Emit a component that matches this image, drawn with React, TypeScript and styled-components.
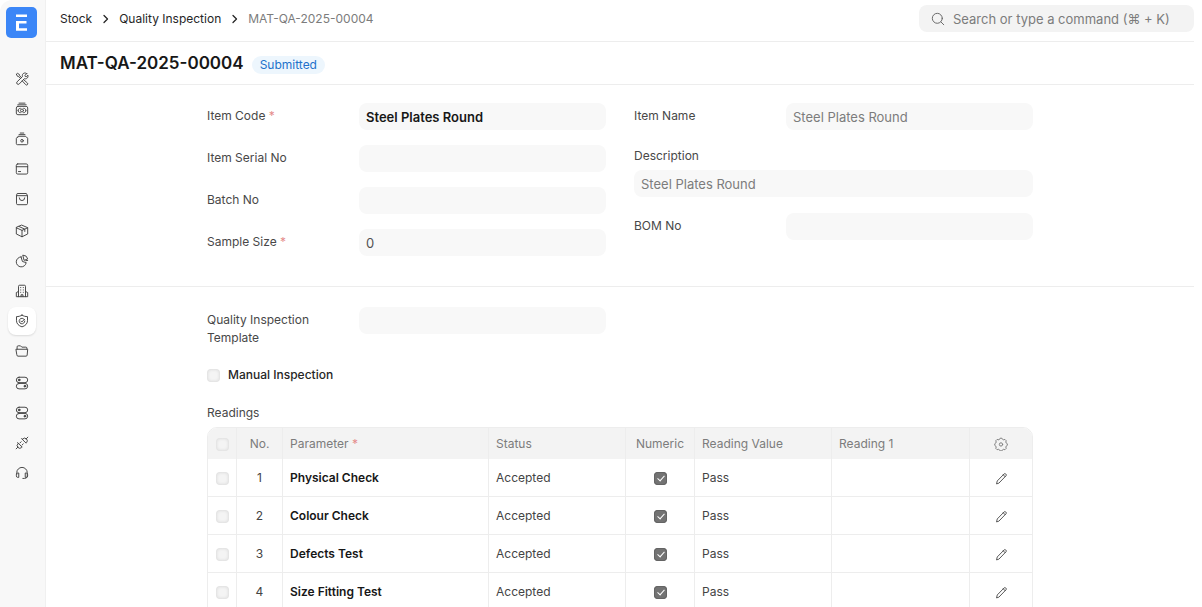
import React from 'react';
import styled, { createGlobalStyle, css } from 'styled-components';

const GlobalStyle = createGlobalStyle`
  *, *::before, *::after { box-sizing: border-box; }
  body {
    margin: 0;
    background: #fff;
    color: #383838;
    font-family: Inter, "Liberation Sans", sans-serif;
    font-size: 12px;
    line-height: 18px;
  }
  button, input { font: inherit; color: inherit; margin: 0; }
`;

const Shell = styled.div`
  display: flex;
  height: 100vh;
  padding-right: 8px;
  overflow: hidden;
`;

const Sidebar = styled.aside`
  flex: none;
  display: flex;
  flex-direction: column;
  align-items: center;
  width: 46px;
  padding: 7px 2px 0 0;
  background: #f8f8f8;
  border-right: 1px solid #f0f0f0;
  border-top-left-radius: 12px;
`;

const LogoLink = styled.a`
  display: block;
  width: 31px;
  height: 31px;
  margin-bottom: 27px;
  svg { display: block; }
`;

const Nav = styled.nav`
  display: flex;
  flex-direction: column;
  gap: 4px;
`;

const NavGroup = styled.div`
  display: flex;
  flex-direction: column;
  gap: 2px;
`;

const NavLink = styled.a<{ $active?: boolean }>`
  display: flex;
  align-items: center;
  justify-content: center;
  width: 28px;
  height: 28px;
  border-radius: 8px;
  color: #444;
  ${(p) => p.$active && css`
    background: #fff;
    box-shadow: 0 1px 2px rgba(0, 0, 0, 0.12);
  `}
`;

const Main = styled.main`
  flex: 1;
  min-width: 0;
`;

const TopBar = styled.header`
  display: flex;
  align-items: center;
  justify-content: space-between;
  height: 42px;
  padding: 0 0 4px 14px;
  border-bottom: 1px solid #ededed;
`;

const Crumbs = styled.nav`
  display: flex;
  align-items: center;
  gap: 9px;
`;

const Crumb = styled.a<{ $current?: boolean }>`
  color: ${(p) => (p.$current ? '#7c7c7c' : '#262626')};
  text-decoration: none;
`;

const SearchBox = styled.label`
  display: flex;
  align-items: center;
  gap: 8px;
  width: 275px;
  height: 27px;
  padding: 0 12px;
  border-radius: 8px;
  background: #f3f3f3;
  color: #666;
  font-size: 13px;
  svg { flex: none; }
`;

const SearchInput = styled.input`
  flex: 1;
  min-width: 0;
  padding: 0;
  border: 0;
  outline: 0;
  background: transparent;
  &::placeholder { color: #7c7c7c; opacity: 1; }
`;

const TitleBar = styled.div`
  display: flex;
  align-items: center;
  gap: 8px;
  height: 43px;
  padding-left: 14px;
  border-bottom: 1px solid #ededed;
`;

const Title = styled.h1`
  margin: 0;
  color: #171717;
  font-size: 17px;
  line-height: 24px;
  font-weight: 600;
`;

const Badge = styled.span`
  margin-top: 3px;
  padding: 0 8px;
  border-radius: 9px;
  background: #edf6fd;
  color: #2271cb;
`;

const Section = styled.section<{ $divided?: boolean }>`
  padding: ${(p) => (p.$divided ? '18px 0 30px' : '20px 0 0')};
  border-bottom: ${(p) => (p.$divided ? '1px solid #ededed' : '0')};
`;

const Content = styled.div`
  max-width: 826px;
  margin: 0 auto;
`;

const Columns = styled.div`
  display: grid;
  grid-template-columns: 1fr 1fr;
  column-gap: 28px;
`;

const Column = styled.div<{ $gap: number }>`
  display: flex;
  flex-direction: column;
  gap: ${(p) => p.$gap}px;
`;

const FieldRow = styled.div<{ $stacked?: boolean }>`
  display: grid;
  grid-template-columns: ${(p) => (p.$stacked ? '1fr' : '152px 1fr')};
  row-gap: 5px;
  align-items: start;
`;

const FieldLabel = styled.label<{ $stacked?: boolean }>`
  max-width: 120px;
  padding-top: ${(p) => (p.$stacked ? '1px' : '4px')};
  color: #484848;
`;

const Required = styled.span`
  color: #e58b8b;
`;

const FieldInput = styled.input<{ $strong?: boolean; $dark?: boolean }>`
  width: 100%;
  height: 27px;
  padding: 0 7px;
  border: 0;
  border-radius: 8px;
  outline: 0;
  background: #f8f8f8;
  color: ${(p) => (p.$strong ? '#171717' : p.$dark ? '#525252' : '#7c7c7c')};
  font-size: 13px;
  font-weight: ${(p) => (p.$strong ? 600 : 400)};
`;

const Tick = styled.input`
  appearance: none;
  display: inline-block;
  position: relative;
  width: 13px;
  height: 13px;
  border-radius: 4px;
  background: #f4f4f4;
  box-shadow: inset 0 0 3px 1px rgba(0, 0, 0, 0.09);
  vertical-align: middle;
  &:checked {
    background: #737373;
    box-shadow: inset 0 0 0 1px #646464;
  }
  &:checked::after {
    content: '';
    position: absolute;
    left: 5px;
    top: 2px;
    width: 4px;
    height: 7px;
    border: solid #fff;
    border-width: 0 1px 1px 0;
    transform: rotate(42deg);
  }
`;

const TickRow = styled.div`
  display: flex;
  align-items: center;
  gap: 8px;
  margin: 19px 0 20px;
  color: #262626;
  font-weight: 500;
`;

const TableLabel = styled.h2`
  margin: 0 0 5px;
  color: #484848;
  font-size: 12px;
  line-height: 18px;
  font-weight: 400;
`;

const Table = styled.table`
  width: 100%;
  table-layout: fixed;
  border: 1px solid #ededed;
  border-radius: 10px 10px 0 0;
  border-collapse: separate;
  border-spacing: 0;
  overflow: hidden;
`;

const cell = css<{ $center?: boolean }>`
  padding: 0 ${(p) => (p.$center ? '0' : '7px')};
  border-right: 1px solid #ededed;
  text-align: ${(p) => (p.$center ? 'center' : 'left')};
  white-space: nowrap;
  &:last-child { border-right: 0; }
`;

const Th = styled.th<{ $center?: boolean }>`
  ${cell}
  height: 31px;
  background: #f3f3f3;
  color: #7c7c7c;
  font-weight: 400;
`;

const Td = styled.td<{ $center?: boolean; $strong?: boolean }>`
  ${cell}
  height: 38px;
  border-bottom: 1px solid #ededed;
  color: ${(p) => (p.$strong ? '#171717' : '#444')};
  font-weight: ${(p) => (p.$strong ? 600 : 400)};
`;

const IconButton = styled.button`
  display: inline-flex;
  padding: 2px;
  border: 0;
  background: transparent;
  vertical-align: middle;
`;

type IconProps = { children: React.ReactNode; size?: number };

const Icon = ({ children, size = 14 }: IconProps) => (
  <svg width={size} height={size} viewBox="0 0 16 16" fill="none" stroke="currentColor"
    strokeWidth="1.1" strokeLinecap="round" strokeLinejoin="round" aria-hidden="true">
    {children}
  </svg>
);

const toggles = (
  <>
    <rect x="1.5" y="1.4" width="13" height="6.2" rx="3.1" />
    <circle cx="4.7" cy="4.5" r="1" fill="currentColor" />
    <rect x="1.5" y="8.5" width="13" height="6.2" rx="3.1" />
    <circle cx="11.3" cy="11.6" r="1" fill="currentColor" />
  </>
);

type NavEntry = { name: string; art: React.ReactNode; active?: boolean };

const navGroups: NavEntry[][] = [
  [
    {
      name: 'Tools',
      art: (
        <>
          <path d="M1.6 2.6 2.7 1.5 5 2.8 5.3 4.3 7.4 6.4M1.6 2.6 2.9 5 4.3 5.3 6.4 7.4" />
          <path d="M9.8 8.7 14.2 12.6a1.3 1.3 0 0 1-1.9 1.9L8.4 10.3" />
          <path d="M13.3 1.9 11.4 3.8l.3 1.3 1.3.3 1.7-1.8c.5 1.6-.1 3.2-1.5 3.9-.8.4-1.7.4-2.4.1L4.9 13.6a1.7 1.7 0 0 1-2.5-2.4L8.5 5.3c-.5-1.9.3-3.7 2.2-4.100.9-.2 1.800 0 2.600.7Z" />
        </>
      ),
    },
    {
      name: 'Accounting',
      art: (
        <>
          <path d="M4.6 1.3h6.8M3.2 3.2h9.6" />
          <rect x="1.5" y="5" width="13" height="9.5" rx="1.8" />
          <path d="M3.5 9.7c0-1.4 1-2.5 2.6-2.5M3.5 9.7c0 1.4 1 2.5 2.6 2.5M12.5 9.7c0-1.4-1-2.5-2.6-2.5M12.5 9.7c0 1.4-1 2.5-2.6 2.5" />
          <circle cx="8" cy="9.7" r="1.7" />
        </>
      ),
    },
    {
      name: 'Buying',
      art: (
        <>
          <path d="M6 1.2h4M4.6 3h6.8" />
          <path d="M3.8 4.9h8.4l1 1.3h.1a1.3 1.3 0 0 1 1.2 1.3v5.6a1.4 1.4 0 0 1-1.4 1.4H2.9a1.4 1.4 0 0 1-1.4-1.4V7.5a1.3 1.3 0 0 1 1.3-1.3Z" />
          <circle cx="8" cy="10" r="1.5" />
        </>
      ),
    },
    {
      name: 'Payments',
      art: (
        <>
          <rect x="1.5" y="2.2" width="13" height="11.6" rx="1.6" />
          <path d="M1.5 5.4h13M4 10.9h2.4" />
        </>
      ),
    },
    {
      name: 'Selling',
      art: (
        <>
          <path d="M3 1.7h10l1.3 2.4v8.9a1.5 1.5 0 0 1-1.5 1.5H3.2A1.5 1.5 0 0 1 1.7 13V4.1Z" />
          <path d="M1.9 4.2h12.2M4.9 6.7a3.1 3.1 0 0 0 6.2 0" />
        </>
      ),
    },
  ],
  [
    {
      name: 'Stock',
      art: (
        <>
          <path d="m8 1.4 6.5 2.8v7.2L8 14.6l-6.5-3.2V4.2Z" />
          <path d="M1.5 4.3 8 7.3l6.5-3M8 7.3v7.3M4.7 2.9l6.5 3v2.6" />
        </>
      ),
    },
    {
      name: 'Assets',
      art: (
        <>
          <path d="M6.9 3.3a5.7 5.7 0 1 0 5.9 6.5L8.5 8.6 6.9 3.3Z" />
          <path d="M9.3 1.3a5.4 5.4 0 0 1 5.2 4.3l-3.7 1.5Z" />
          <path d="m12.4 7.6 2.1-.3" />
        </>
      ),
    },
    {
      name: 'Manufacturing',
      art: (
        <>
          <path d="M4 14.5V2.7a1.3 1.3 0 0 1 1.3-1.3h5.4A1.3 1.3 0 0 1 12 2.7v11.8M4 8.5l-2.5 1.3v4.7h13V9.8L12 8.5M6.9 14.5v-2.2h2.2v2.2" />
          <path d="M6.5 4v.2M9.5 4v.2M6.5 6.7v.2M9.5 6.7v.2M6.5 9.4v.2M9.5 9.4v.2" />
        </>
      ),
    },
    {
      name: 'Quality',
      active: true,
      art: (
        <>
          <path d="M8 1.3c1.9 1.2 4 1.7 6.3 1.7v4.7c0 3.3-2.4 5.7-6.3 7-3.9-1.3-6.3-3.7-6.3-7V3C4 3 6.1 2.5 8 1.3Z" />
          <path d="M10.7 6.3A3.2 3.2 0 1 0 11.2 8M6.6 8l1.2 1.2 3-3.2" />
        </>
      ),
    },
    {
      name: 'Projects',
      art: (
        <>
          <path d="M2.4 5.8V3.3A1.2 1.2 0 0 1 3.6 2.1h2.7l1.5 1.5h4.6a1.2 1.2 0 0 1 1.2 1.2v1" />
          <path d="M1.5 6h13l-.6 6.7a1.3 1.3 0 0 1-1.3 1.2H3.4a1.3 1.3 0 0 1-1.3-1.2Z" />
        </>
      ),
    },
  ],
  [
    { name: 'Settings', art: toggles },
    { name: 'ERPNext Settings', art: toggles },
    {
      name: 'Integrations',
      art: (
        <>
          <path d="m1.3 14.7 2-2M12.7 3.3l2-2M7 6.6 5.7 7.9M9.4 9 8.1 10.3" />
          <path d="m3.3 7.8 4.9 4.9-.7.5a2.9 2.9 0 0 1-4.1-.1 2.9 2.9 0 0 1-.1-4.2Z" />
          <path d="m7.8 3.3 4.9 4.9.5-.7a2.9 2.9 0 0 0-.1-4.1 2.9 2.9 0 0 0-4.2-.1Z" />
        </>
      ),
    },
    {
      name: 'Support',
      art: (
        <>
          <path d="M2 9.5V7.6a6 6 0 0 1 12 0v4c0 1.6-1.2 2.6-3 2.6H9" />
          <path d="M1.6 9.4A1.4 1.4 0 0 1 3 8h1.3v5H3a1.4 1.4 0 0 1-1.4-1.4ZM14.4 9.4A1.4 1.4 0 0 0 13 8h-1.3v5H13a1.4 1.4 0 0 0 1.4-1.4Z" />
        </>
      ),
    },
  ],
];

const Logo = () => (
  <svg width="31" height="31" viewBox="0 0 31 31" aria-hidden="true">
    <rect width="31" height="31" rx="5" fill="#3b86f7" />
    <path d="M10 7.5h11v2.5H10zM10 14h10.5v2.6h-7.5v4.6H21v2.6H10z" fill="#fff" />
  </svg>
);

const Chevron = () => (
  <svg width="9" height="10" viewBox="0 0 9 10" fill="none" stroke="#262626"
    strokeWidth="1.3" strokeLinecap="round" strokeLinejoin="round" aria-hidden="true">
    <path d="m3 1.5 3.5 3.5L3 8.5" />
  </svg>
);

type FieldProps = {
  id: string;
  label: string;
  value?: string;
  required?: boolean;
  strong?: boolean;
  dark?: boolean;
  stacked?: boolean;
};

const Field = ({ id, label, value = '', required, strong, dark, stacked }: FieldProps) => (
  <FieldRow $stacked={stacked}>
    <FieldLabel htmlFor={id} $stacked={stacked}>
      {label}{required && <Required> *</Required>}
    </FieldLabel>
    <FieldInput id={id} value={value} readOnly $strong={strong} $dark={dark} />
  </FieldRow>
);

const parameters = ['Physical Check', 'Colour Check', 'Defects Test', 'Size Fitting Test'];
const columnWidths = [29, 46, undefined, 137, 69, 137, 138, 62];

export default function App() {
  return (
    <>
      <GlobalStyle />
      <Shell>
        <Sidebar>
          <LogoLink href="#" aria-label="Home"><Logo /></LogoLink>
          <Nav aria-label="Modules">
            {navGroups.map((group, i) => (
              <NavGroup key={i}>
                {group.map((entry) => (
                  <NavLink key={entry.name} href="#" aria-label={entry.name} $active={entry.active}>
                    <Icon>{entry.art}</Icon>
                  </NavLink>
                ))}
              </NavGroup>
            ))}
          </Nav>
        </Sidebar>
        <Main>
          <TopBar>
            <Crumbs aria-label="Breadcrumb">
              <Crumb href="#">Stock</Crumb>
              <Chevron />
              <Crumb href="#">Quality Inspection</Crumb>
              <Chevron />
              <Crumb href="#" $current>MAT-QA-2025-00004</Crumb>
            </Crumbs>
            <SearchBox>
              <Icon>
                <circle cx="7.2" cy="7.2" r="5.7" />
                <path d="m11.4 11.4 3.2 3.2" />
              </Icon>
              <SearchInput type="text" aria-label="Search" placeholder="Search or type a command (⌘ + K)" />
            </SearchBox>
          </TopBar>
          <TitleBar>
            <Title>MAT-QA-2025-00004</Title>
            <Badge>Submitted</Badge>
          </TitleBar>
          <Section $divided>
            <Content>
              <Columns>
                <Column $gap={15}>
                  <Field id="item-code" label="Item Code" value="Steel Plates Round" required strong />
                  <Field id="serial-no" label="Item Serial No" />
                  <Field id="batch-no" label="Batch No" />
                  <Field id="sample-size" label="Sample Size" value="0" required dark />
                </Column>
                <Column $gap={16}>
                  <Field id="item-name" label="Item Name" value="Steel Plates Round" />
                  <Field id="description" label="Description" value="Steel Plates Round" stacked />
                  <Field id="bom-no" label="BOM No" />
                </Column>
              </Columns>
            </Content>
          </Section>
          <Section>
            <Content>
              <Columns>
                <Field id="template" label="Quality Inspection Template" />
              </Columns>
              <TickRow>
                <Tick type="checkbox" id="manual" />
                <label htmlFor="manual">Manual Inspection</label>
              </TickRow>
              <TableLabel id="readings">Readings</TableLabel>
              <Table aria-labelledby="readings">
                <colgroup>
                  {columnWidths.map((w, i) => <col key={i} width={w} />)}
                </colgroup>
                <thead>
                  <tr>
                    <Th $center><Tick type="checkbox" aria-label="Select all" /></Th>
                    <Th $center>No.</Th>
                    <Th>Parameter<Required> *</Required></Th>
                    <Th>Status</Th>
                    <Th $center>Numeric</Th>
                    <Th>Reading Value</Th>
                    <Th>Reading 1</Th>
                    <Th $center>
                      <IconButton aria-label="Configure columns">
                        <Icon>
                          <path d="m6.1 2.8.9-1.4h2l.9 1.4.9.4 1.7-.4 1.4 1.4-.4 1.7.4.9 1.3.9v1.9l-1.300.9-.4.9.4 1.700-1.400 1.400-1.700-.4-.9.4-.9 1.400H7l-.9-1.400-.9-.4-1.700.4-1.400-1.400.4-1.700-.4-.9L.9 9.600V7.700l1.200-.9.4-.9-.4-1.700 1.400-1.400 1.700.4Z" />
                          <circle cx="8" cy="8.500" r="1.900" />
                        </Icon>
                      </IconButton>
                    </Th>
                  </tr>
                </thead>
                <tbody>
                  {parameters.map((name, i) => (
                    <tr key={name}>
                      <Td $center><Tick type="checkbox" aria-label={`Select row ${i + 1}`} /></Td>
                      <Td $center>{i + 1}</Td>
                      <Td $strong>{name}</Td>
                      <Td>Accepted</Td>
                      <Td $center><Tick type="checkbox" checked readOnly aria-label="Numeric" /></Td>
                      <Td>Pass</Td>
                      <Td />
                      <Td $center>
                        <IconButton aria-label={`Edit row ${i + 1}`}>
                          <Icon size={13}>
                            <path d="m2 14.2.8-3.2 8.4-8.6a1.4 1.4 0 0 1 2 0l.3.3a1.4 1.4 0 0 1 0 2L5.1 13.4ZM10.2 3.5l2.2 2.2" />
                          </Icon>
                        </IconButton>
                      </Td>
                    </tr>
                  ))}
                </tbody>
              </Table>
            </Content>
          </Section>
        </Main>
      </Shell>
    </>
  );
}
